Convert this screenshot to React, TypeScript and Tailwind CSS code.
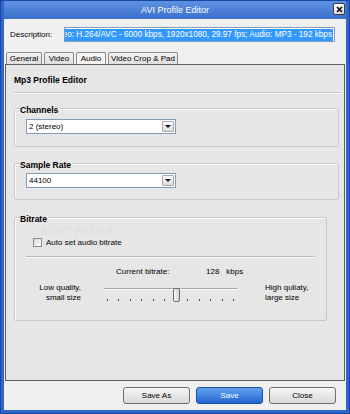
const font = { fontFamily: '"Liberation Sans", Arial, sans-serif' };

function Select({ value }: { value: string }) {
  return (
    <div className="flex h-[15px] w-[150px] items-center border border-[#7f9db9] bg-white pl-[2px]">
      <span className="flex-1 text-[8px] leading-none text-black">{value}</span>
      <div className="m-[1px] flex h-[11px] w-[12px] items-center justify-center rounded-[1px] border border-[#a8a8a8] bg-gradient-to-b from-[#fafafa] to-[#dcdcdc]">
        <svg width="6" height="3" viewBox="0 0 6 3">
          <path d="M0 0h6L3 3z" fill="#111" />
        </svg>
      </div>
    </div>
  );
}

function GroupBox({
  title,
  className,
  children,
}: {
  title: string;
  className: string;
  children: React.ReactNode;
}) {
  return (
    <div className={`relative rounded-[2px] border border-[#c9c9c9] shadow-[inset_1px_1px_0_#fbfbfb] ${className}`}>
      <span className="absolute left-[5px] top-[-3px] bg-[#e6e6e6] pr-[1px] text-[8.5px] font-bold leading-[9px] text-black">
        {title}
      </span>
      {children}
    </div>
  );
}

function Tab({ label, width, active }: { label: string; width: string; active?: boolean }) {
  return (
    <div
      className={`flex h-[12px] items-center justify-center whitespace-nowrap rounded-t-[2px] border border-b-0 border-[#8a8a8a] text-[8px] leading-none ${width} ${
        active ? "bg-[#f4f4f4]" : "bg-gradient-to-b from-[#f3f3f3] to-[#dedede]"
      }`}
    >
      {label}
    </div>
  );
}

function Button({ label, primary }: { label: string; primary?: boolean }) {
  return (
    <div
      className={`flex h-[17px] w-[67px] items-center justify-center rounded-[3px] border text-[8px] leading-none ${
        primary
          ? "border-[#1d4fa8] bg-gradient-to-b from-[#62a2f2] to-[#2365cf] text-white"
          : "border-[#6f6f6f] bg-gradient-to-b from-[#f6f6f6] to-[#d9d9d9] text-black"
      }`}
    >
      {label}
    </div>
  );
}

function Slider() {
  const ticks = Array.from({ length: 12 });
  return (
    <div className="relative h-[20px] w-[133px]">
      {/* track */}
      <div className="mt-[6px] h-[2px] w-full border-t border-[#a3a3a3] bg-white" />
      {/* ticks */}
      <div className="mt-[9px] flex justify-between px-[3px]">
        {ticks.map((_, i) => (
          <div key={i} className="h-[2px] w-[1px] bg-[#4a4a4a]" />
        ))}
      </div>
      {/* thumb */}
      <div className="absolute left-[69px] top-[0px] h-[14px] w-[7px] rounded-[2px] border border-[#6d6d6d] bg-gradient-to-r from-[#fafafa] to-[#cfcfcf]" />
    </div>
  );
}

export default function App() {
  return (
    <div
      className="flex h-[414px] w-[350px] flex-col border border-[#1a46a3] bg-[#2f66c9] px-[3px] pb-[3px]"
      style={font}
    >
      {/* Title bar */}
      <div className="relative flex h-[18px] items-center justify-center bg-gradient-to-b from-[#5d92e2] to-[#3b70cb]">
        <span className="text-[9px] leading-none text-white">AVI Profile Editor</span>
        <div className="absolute right-[1px] top-[2px] flex h-[12px] w-[12px] items-center justify-center rounded-[2px] border border-[#3c3c3c] bg-gradient-to-b from-white to-[#dcdcdc]">
          <svg width="7" height="7" viewBox="0 0 7 7">
            <path d="M1 1l5 5M6 1L1 6" stroke="#000" strokeWidth="1.6" />
          </svg>
        </div>
      </div>

      {/* Body */}
      <div className="flex flex-1 flex-col bg-[#f0f0f0]">
        {/* Description */}
        <div className="mt-[8px] flex h-[15px] items-center pl-[6px]">
          <span className="w-[54px] text-[8px] leading-none text-black">Description:</span>
          <div className="flex h-[15px] w-[271px] items-center justify-end overflow-hidden whitespace-nowrap border border-[#7f9db9] bg-white px-[1px]">
            <span className="shrink-0 bg-[#3399ff] px-[1px] text-[8.2px] leading-[12px] text-white">
              Video: H.264/AVC - 6000 kbps, 1920x1080, 29.97 fps; Audio: MP3 - 192 kbps
            </span>
          </div>
        </div>

        {/* Tabs */}
        <div className="ml-[2px] mt-[10px] flex gap-[2px]">
          <Tab label="General" width="w-[36px]" />
          <Tab label="Video" width="w-[30px]" />
          <Tab label="Audio" width="w-[30px]" active />
          <Tab label="Video Crop & Pad" width="w-[70px]" />
        </div>

        {/* Tab panel */}
        <div className="mx-[1px] flex h-[317px] flex-col border border-[#5f5f5f] bg-[#e6e6e6] pl-[8px] pr-[2px]">
          <div className="mt-[10px] h-[11px] text-[8.5px] font-bold leading-[11px] text-black">
            Mp3 Profile Editor
          </div>
          <div className="mt-[6px] h-[2px] border-t border-[#c6c6c6] bg-[#fafafa]" />

          <GroupBox title="Channels" className="mr-[3px] mt-[14px] h-[39px] pl-[11px] pt-[10px]">
            <Select value="2 (stereo)" />
          </GroupBox>

          <GroupBox title="Sample Rate" className="mr-[3px] mt-[16px] h-[37px] pl-[11px] pt-[9px]">
            <Select value="44100" />
          </GroupBox>

          <GroupBox title="Bitrate" className="mt-[17px] h-[104px] w-[313px]">
            {/* watermark */}
            <span
              className="absolute left-[26px] top-[7px] text-[12px] leading-[12px] tracking-[1px] text-[#dedede]"
              style={{ fontFamily: '"Liberation Serif", serif' }}
            >
              SOFTPEDIA
            </span>
            <div className="relative ml-[18px] mt-[20px] flex h-[9px] items-center">
              <div className="h-[9px] w-[9px] border border-[#8e8f8f] bg-gradient-to-br from-[#dcdcdc] to-[#fbfbfb]" />
              <span className="ml-[4px] text-[8px] leading-none text-black">Auto set audio bitrate</span>
            </div>
            <div className="relative mx-[11px] mt-[9px] h-[2px] border-t border-[#b9b9b9] bg-[#fafafa]" />
            <div className="mt-[8px] flex h-[11px] items-center pl-[101px] text-[8px] leading-none text-black">
              <span className="w-[90px]">Current bitrate:</span>
              <span>128</span>
              <span className="ml-[7px]">kbps</span>
            </div>
            <div className="mt-[5px] flex items-start">
              <div className="mt-[1px] w-[66px] text-right text-[8px] leading-[10px] text-black">
                Low quality,
                <br />
                small size
              </div>
              <div className="ml-[23px]">
                <Slider />
              </div>
              <div className="ml-[28px] mt-[1px] text-[8px] leading-[10px] text-black">
                High quliaty,
                <br />
                large size
              </div>
            </div>
          </GroupBox>
        </div>

        {/* Buttons */}
        <div className="mr-[10px] mt-[6px] flex justify-end gap-[6px]">
          <Button label="Save As" />
          <Button label="Save" primary />
          <Button label="Close" />
        </div>
      </div>
    </div>
  );
}
